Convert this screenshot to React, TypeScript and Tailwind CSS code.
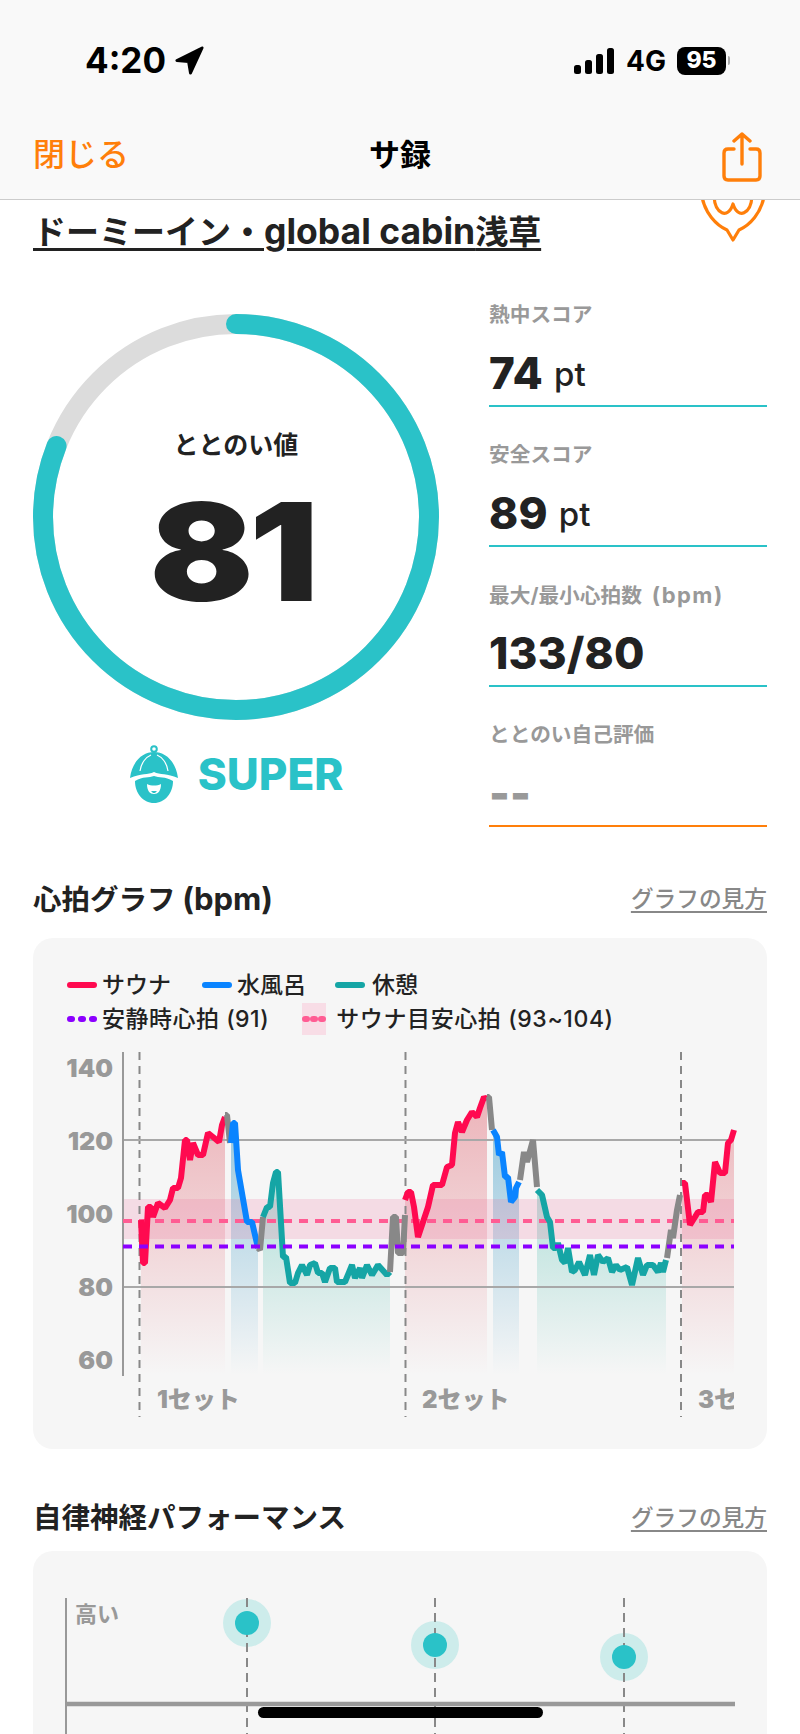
const TEAL = '#2ac2c8'

const sets: { color: string; pts: number[][]; fill?: string }[] = [
  { color: '#ff0a50', fill: 'url(#red)', pts: [[141, 1220], [143, 1263], [145, 1263], [148, 1207], [151, 1207], [153, 1217], [158, 1203], [165, 1208], [170, 1200], [173, 1188], [178, 1188], [181, 1178], [185, 1140], [187, 1140], [190, 1160], [193, 1143], [198, 1155], [203, 1155], [208, 1133], [213, 1137], [219, 1142], [222, 1125], [225, 1117]] },
  { color: '#888888', pts: [[225, 1115], [227, 1115], [230, 1143]] },
  { color: '#0a84ff', fill: 'url(#blue)', pts: [[231, 1143], [233, 1123], [235, 1123], [238, 1170], [247, 1222], [252, 1222], [258, 1248]] },
  { color: '#888888', pts: [[258, 1248], [260, 1250], [263, 1217]] },
  { color: '#15a5a5', fill: 'url(#green)', pts: [[263, 1217], [267, 1207], [270, 1207], [273, 1183], [276, 1172], [278, 1172], [283, 1257], [286, 1257], [290, 1283], [295, 1283], [298, 1273], [302, 1265], [307, 1275], [310, 1265], [315, 1263], [318, 1273], [322, 1273], [325, 1282], [330, 1268], [335, 1268], [337, 1282], [345, 1282], [352, 1265], [355, 1278], [360, 1268], [362, 1278], [367, 1265], [372, 1275], [378, 1265], [387, 1275], [390, 1272]] },
  { color: '#888888', pts: [[390, 1272], [393, 1217], [396, 1217], [398, 1253], [403, 1253], [405, 1215]] },
  { color: '#ff0a50', fill: 'url(#red)', pts: [[405, 1200], [408, 1192], [411, 1192], [414, 1207], [418, 1237], [423, 1222], [428, 1207], [433, 1185], [442, 1185], [447, 1167], [452, 1165], [455, 1133], [458, 1122], [462, 1132], [467, 1120], [472, 1112], [477, 1117], [480, 1108], [484, 1097], [487, 1100]] },
  { color: '#888888', pts: [[487, 1097], [489, 1097], [492, 1130]] },
  { color: '#0a84ff', fill: 'url(#blue)', pts: [[493, 1130], [497, 1137], [499, 1155], [502, 1152], [505, 1177], [508, 1177], [511, 1202], [515, 1197], [516, 1188], [519, 1182]] },
  { color: '#888888', pts: [[520, 1180], [524, 1152], [527, 1162], [533, 1140], [537, 1187]] },
  { color: '#15a5a5', fill: 'url(#green)', pts: [[537, 1190], [542, 1195], [547, 1217], [550, 1222], [553, 1248], [556, 1248], [558, 1243], [562, 1260], [565, 1263], [568, 1248], [572, 1272], [575, 1270], [579, 1262], [585, 1275], [590, 1255], [594, 1275], [598, 1255], [603, 1262], [608, 1258], [612, 1272], [616, 1265], [620, 1270], [627, 1267], [632, 1285], [638, 1258], [643, 1275], [647, 1265], [653, 1265], [658, 1272], [661, 1263], [663, 1272], [666, 1260]] },
  { color: '#888888', pts: [[667, 1258], [671, 1230], [673, 1238], [677, 1210], [680, 1195]] },
  { color: '#ff0a50', fill: 'url(#red)', pts: [[682, 1183], [685, 1183], [690, 1225], [695, 1217], [698, 1212], [703, 1212], [705, 1195], [708, 1195], [711, 1202], [715, 1162], [720, 1173], [725, 1173], [728, 1143], [731, 1140], [734, 1130]] },
]

const toLine = (pts: number[][]) => pts.map(p => p.join(',')).join(' ')
const toFill = (pts: number[][]) =>
  `${pts[0][0]},1378 ${toLine(pts)} ${pts[pts.length - 1][0]},1378`

function HeartChart() {
  return (
    <svg viewBox="33 1045 734 380" className="block h-[380px] w-[734px]">
      <defs>
        <linearGradient id="red" gradientUnits="userSpaceOnUse" x1="0" y1="1110" x2="0" y2="1375">
          <stop offset="0" stopColor="#dc4655" stopOpacity="0.36" />
          <stop offset="1" stopColor="#dc4655" stopOpacity="0" />
        </linearGradient>
        <linearGradient id="blue" gradientUnits="userSpaceOnUse" x1="0" y1="1130" x2="0" y2="1375">
          <stop offset="0" stopColor="#1e8cbe" stopOpacity="0.42" />
          <stop offset="1" stopColor="#1e8cbe" stopOpacity="0" />
        </linearGradient>
        <linearGradient id="green" gradientUnits="userSpaceOnUse" x1="0" y1="1170" x2="0" y2="1375">
          <stop offset="0" stopColor="#14aa96" stopOpacity="0.32" />
          <stop offset="1" stopColor="#14aa96" stopOpacity="0" />
        </linearGradient>
      </defs>

      {sets.filter(s => s.fill).map((s, i) => (
        <polygon key={i} points={toFill(s.pts)} fill={s.fill} />
      ))}

      <rect x="123" y="1199" width="611" height="40" fill="#f06496" fillOpacity="0.18" />

      {[139.5, 405.5, 681].map(x => (
        <line key={x} x1={x} y1="1052" x2={x} y2="1417" stroke="#888" strokeWidth="2" strokeDasharray="8 6" />
      ))}
      {[1140, 1287].map(y => (
        <line key={y} x1="123" y1={y} x2="734" y2={y} stroke="#a8a8a8" strokeWidth="2" />
      ))}
      <line x1="123" y1="1052" x2="123" y2="1376" stroke="#999" strokeWidth="2" />

      <line x1="123" y1="1221" x2="734" y2="1221" stroke="#ff5c93" strokeWidth="4" strokeDasharray="9 7" />

      {sets.map((s, i) => (
        <polyline key={i} points={toLine(s.pts)} fill="none" stroke={s.color} strokeWidth="6" strokeLinejoin="bevel" />
      ))}

      <line x1="123" y1="1246.5" x2="734" y2="1246.5" stroke="#8b00ff" strokeWidth="4" strokeDasharray="9 7" />

      {[[140, 1068], [120, 1141], [100, 1214], [80, 1287], [60, 1360]].map(([v, y]) => (
        <text key={v} x="113" y={y + 9} textAnchor="end" className="fill-[#999] text-[25px] font-black">{v}</text>
      ))}
      <text x="157" y="1408" className="fill-[#999] text-[24px] font-black">1セット</text>
      <text x="422" y="1408" className="fill-[#999] text-[24px] font-black">2セット</text>
      <svg x="690" y="1380" width="44" height="40" viewBox="690 1380 44 40">
        <text x="698" y="1408" className="fill-[#999] text-[24px] font-black">3セット</text>
      </svg>
    </svg>
  )
}

function NerveChart() {
  return (
    <svg viewBox="33 1551 734 190" className="block h-[190px] w-[734px]">
      <line x1="66" y1="1598" x2="66" y2="1741" stroke="#999" strokeWidth="2" />
      {[[247, 1623], [435, 1645], [624, 1657]].map(([x, y]) => (
        <g key={x}>
          <circle cx={x} cy={y} r="24" fill="#cdeceb" />
          <line x1={x} y1="1598" x2={x} y2="1741" stroke="#888" strokeWidth="2" strokeDasharray="9 6" />
          <circle cx={x} cy={y} r="12" fill={TEAL} />
        </g>
      ))}
      <line x1="66" y1="1704" x2="735" y2="1704" stroke="#999" strokeWidth="4.5" />
      <text x="75" y="1622" className="fill-[#999] text-[22px] font-bold">高い</text>
    </svg>
  )
}

function Stat({ label, value, unit, line = TEAL, muted }: { label: React.ReactNode; value: string; unit?: string; line?: string; muted?: boolean }) {
  return (
    <div className="flex h-[140px] flex-col justify-end border-b-2" style={{ borderColor: line }}>
      <div className="h-[28px] text-[20.7px] leading-[28px] font-bold text-[#999]">{label}</div>
      <div className={`mt-[14px] mb-[2px] flex h-[60px] items-center ${muted ? 'text-[#999]' : 'text-[#222]'}`}>
        <span className={`text-[44px] tracking-[0.2px] ${muted ? 'font-black' : 'font-extrabold'}`}>{value}</span>
        {unit && <span className="ml-[11px] mt-[4px] text-[33px] font-medium">{unit}</span>}
      </div>
    </div>
  )
}

function SectionHead({ children }: { children: React.ReactNode }) {
  return (
    <div className="flex h-[40px] items-center justify-between">
      <div className="text-[28.5px] font-bold text-[#222]">{children}</div>
      <div className="text-[22.7px] font-medium text-[#888] underline underline-offset-4">グラフの見方</div>
    </div>
  )
}

export default function App() {
  return (
    <div className="relative h-[1734px] w-[800px] overflow-hidden bg-white font-['Inter','Noto_Sans_CJK_JP',sans-serif]">
      <header className="relative z-10 h-[200px] border-b border-[#ccc] bg-[#f9f9f9] text-black">
        <div className="flex h-[120px] items-center justify-between pl-[85px] pr-[70px] pt-[1px]">
          <div className="flex items-center gap-[9px]">
            <span className="text-[35px] font-bold leading-none">4:20</span>
            <svg viewBox="0 0 30 30" className="h-[29px] w-[29px]">
              <path d="M28 2 L2 15 L14 16 L16 28 Z" fill="#000" stroke="#000" strokeWidth="3" strokeLinejoin="round" />
            </svg>
          </div>
          <div className="flex items-center">
            <svg viewBox="0 0 40 26" className="h-[26px] w-[40px]">
              <rect x="0" y="17" width="7" height="9" rx="2.5" />
              <rect x="11" y="12" width="7" height="14" rx="2.5" />
              <rect x="22" y="6" width="7" height="20" rx="2.5" />
              <rect x="33" y="0" width="7" height="26" rx="2.5" />
            </svg>
            <span className="ml-[12px] text-[28px] font-bold leading-none">4G</span>
            <span className="ml-[11px] flex h-[28px] w-[49px] items-center justify-center rounded-[8px] bg-black text-[23px] font-extrabold leading-none text-white">95</span>
            <span className="ml-[2px] h-[9px] w-[2px] rounded-r-sm bg-[#aaa]" />
          </div>
        </div>
        <div className="relative flex h-[70px] items-center justify-between pl-[33px] pr-[38px]">
          <span className="text-[32px] font-medium text-[#ff7f0a]">閉じる</span>
          <span className="absolute left-[369px] text-[31px] font-bold">サ録</span>
          <svg viewBox="0 0 40 50" className="mt-[3px] h-[50px] w-[40px]" fill="none" stroke="#ff7f0a" strokeWidth="3.4" strokeLinecap="round" strokeLinejoin="round">
            <path d="M12 17 H6 Q2 17 2 21 V44 Q2 48 6 48 H34 Q38 48 38 44 V21 Q38 17 34 17 H28" />
            <path d="M20 32 V2 M12 9 L20 2 L28 9" />
          </svg>
        </div>
      </header>

      <svg viewBox="0 0 66 72" className="absolute left-[700px] top-[170px] h-[72px] w-[66px]" fill="none" stroke="#ff7f0a" strokeWidth="3.2" strokeLinejoin="round">
        <path d="M1 20 C3 44 18 56 27 60 L33 70 L39 60 C48 56 63 44 65 20" />
        <path d="M14 26 C15 44 28 50 33 34 C38 50 51 44 52 26" />
      </svg>

      <main className="px-[33px] pt-[12px]">
        <div className="h-[40px] whitespace-nowrap text-[33px] font-bold leading-[40px] text-[#222] underline decoration-[3px] underline-offset-[4px]">
          ドーミーイン・<span className="text-[35.5px]">global cabin</span>浅草
        </div>

        <div className="mt-[15px] flex">
          <div className="flex w-[406px] flex-col items-center pt-[47px]">
            <div className="relative h-[406px] w-[406px]">
              <svg viewBox="0 0 406 406" className="h-[406px] w-[406px]">
                <circle cx="203" cy="203" r="193" fill="none" stroke="#dcdcdc" strokeWidth="20" />
                <circle cx="203" cy="203" r="193" fill="none" stroke={TEAL} strokeWidth="20" strokeLinecap="round" pathLength={100} strokeDasharray="81 100" transform="rotate(-90 203 203)" />
              </svg>
              <div className="absolute inset-0 flex flex-col items-center text-[#222]">
                <div className="mt-[114px] text-[25px] font-bold leading-[34px]">ととのい値</div>
                <div className="ml-[-8px] mt-[20px] origin-center scale-x-[1.13] text-[136px] font-black leading-[140px] tracking-[-4px]">81</div>
              </div>
            </div>
            <div className="mt-[25px] flex h-[58px] items-center gap-[19px]">
              <svg viewBox="0 0 50 58" className="h-[58px] w-[50px]">
                <circle cx="25" cy="4" r="2.8" fill="none" stroke={TEAL} strokeWidth="2" />
                <path d="M1 33 C3 17 13 7 25 7 C37 7 47 17 49 33 C38 28 31 30 25 27 C19 30 12 28 1 33 Z" fill={TEAL} />
                <path d="M11 26 C12 18 17 12 22 10 M39 26 C38 18 33 12 28 10" fill="none" stroke="#fff" strokeWidth="1.2" />
                <path d="M6 36 C14 31 20 33 25 31 C30 33 36 31 44 36 C44 48 36 58 25 58 C14 58 6 48 6 36 Z" fill={TEAL} />
                <path d="M18 39 C22 41 28 41 32 39 C32 46 29 49 25 49 C21 49 18 46 18 39 Z" fill="#fff" />
                <path d="M22 46 H28 L26 48 H24 Z" fill={TEAL} />
              </svg>
              <span className="text-[44px] font-extrabold leading-none text-[#2ac2c8]">SUPER</span>
            </div>
          </div>

          <div className="ml-[50px] w-[278px]">
            <Stat label="熱中スコア" value="74" unit="pt" />
            <Stat label="安全スコア" value="89" unit="pt" />
            <Stat label={<>最大/最小心拍数<span className="ml-[10px] text-[22px] tracking-[1.5px]">(bpm)</span></>} value="133/80" />
            <Stat label="ととのい自己評価" value="--" line="#ff7f0a" muted />
          </div>
        </div>

        <div className="mt-[52px]">
          <SectionHead>心拍グラフ <span className="text-[31px]">(bpm)</span></SectionHead>
        </div>
        <section className="mt-[19px] h-[511px] rounded-[20px] bg-[#f6f6f6]">
          <div className="px-[34px] pt-[30px] text-[23px] font-medium leading-[34px] text-[#222]">
            <div className="flex items-center">
              <span className="h-[6px] w-[30px] rounded-full bg-[#ff0a50]" />
              <span className="ml-[5px]">サウナ</span>
              <span className="ml-[31px] h-[6px] w-[30px] rounded-full bg-[#0a84ff]" />
              <span className="ml-[5px]">水風呂</span>
              <span className="ml-[29px] h-[6px] w-[30px] rounded-full bg-[#15a5a5]" />
              <span className="ml-[7px]">休憩</span>
            </div>
            <div className="flex items-center">
              <span className="flex w-[30px] justify-between">
                <i className="h-[6px] w-[8px] rounded-full bg-[#8b00ff]" />
                <i className="h-[6px] w-[8px] rounded-full bg-[#8b00ff]" />
                <i className="h-[6px] w-[8px] rounded-full bg-[#8b00ff]" />
              </span>
              <span className="ml-[5px] tracking-[0.5px]">安静時心拍 (91)</span>
              <span className="ml-[33px] flex h-[32px] w-[24px] items-center justify-between bg-[#f8dde6]">
                <i className="h-[6px] w-[8px] rounded-full bg-[#ff5c93]" />
                <i className="h-[6px] w-[8px] rounded-full bg-[#ff5c93]" />
                <i className="h-[6px] w-[8px] rounded-full bg-[#ff5c93]" />
              </span>
              <span className="ml-[10px] tracking-[0.6px]">サウナ目安心拍 (93~104)</span>
            </div>
          </div>
          <div className="mt-[9px]">
            <HeartChart />
          </div>
        </section>

        <div className="mt-[49px]">
          <SectionHead>自律神経パフォーマンス</SectionHead>
        </div>
        <section className="mt-[13px] h-[300px] rounded-[20px] bg-[#f6f6f6]">
          <NerveChart />
        </section>
      </main>

      <div className="absolute bottom-[16px] left-[258px] h-[11px] w-[285px] rounded-full bg-black" />
    </div>
  )
}
